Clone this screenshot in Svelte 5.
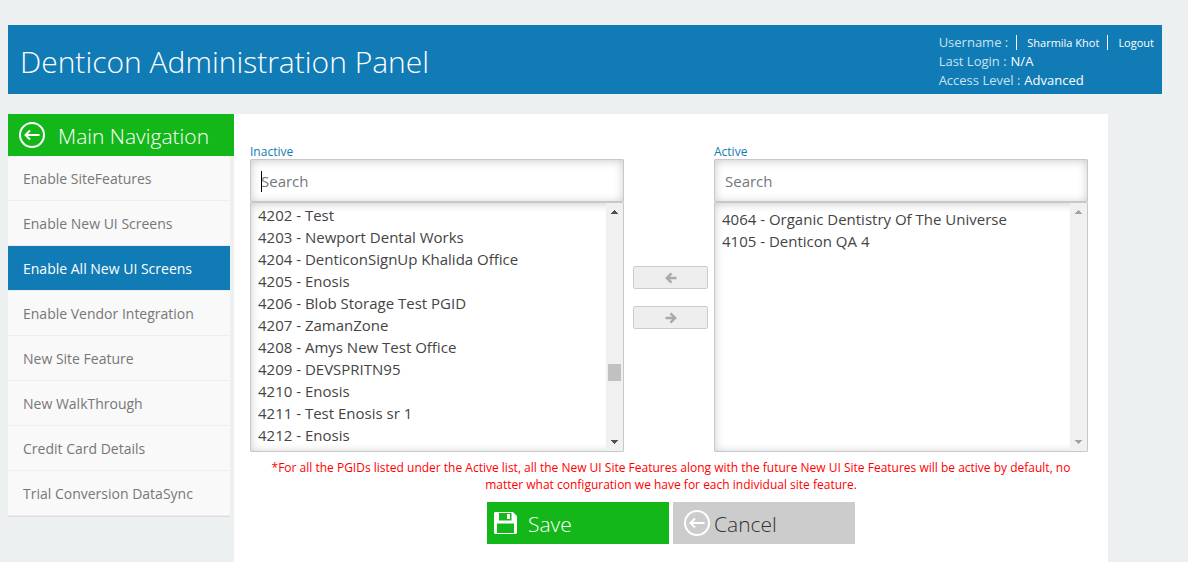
<script>
  const account = [
    { label: 'Last Login', value: 'N/A' },
    { label: 'Access Level', value: 'Advanced' }
  ];

  const links = [
    'Enable SiteFeatures',
    'Enable New UI Screens',
    'Enable All New UI Screens',
    'Enable Vendor Integration',
    'New Site Feature',
    'New WalkThrough',
    'Credit Card Details',
    'Trial Conversion DataSync'
  ];
  let current = $state('Enable All New UI Screens');

  let inactive = $state([
    '4202 - Test',
    '4203 - Newport Dental Works',
    '4204 - DenticonSignUp Khalida Office',
    '4205 - Enosis',
    '4206 - Blob Storage Test PGID',
    '4207 - ZamanZone',
    '4208 - Amys New Test Office',
    '4209 - DEVSPRITN95',
    '4210 - Enosis',
    '4211 - Test Enosis sr 1',
    '4212 - Enosis'
  ]);
  let active = $state([
    '4064 - Organic Dentistry Of The Universe',
    '4105 - Denticon QA 4'
  ]);

  let inactiveQuery = $state('');
  let activeQuery = $state('');
  let inactivePicked = $state([]);
  let activePicked = $state([]);

  const matches = (list, query) =>
    list.filter((name) => name.toLowerCase().includes(query.toLowerCase()));

  function activate() {
    active = [...active, ...inactivePicked];
    inactive = inactive.filter((name) => !inactivePicked.includes(name));
    inactivePicked = [];
  }

  function deactivate() {
    inactive = [...inactive, ...activePicked];
    active = active.filter((name) => !activePicked.includes(name));
    activePicked = [];
  }
</script>

{#snippet circleArrow()}
  <svg class="circle" viewBox="0 0 26 26" aria-hidden="true">
    <circle cx="13" cy="13" r="12" />
    <path d="M20.500 13H6.500M11 8.500L6.500 13L11 17.500" />
  </svg>
{/snippet}

{#snippet scrollbar(thumb)}
  <div class="scrollbar" class:idle={!thumb} aria-hidden="true">
    <svg viewBox="0 0 7 4"><path d="M3 0h1v1h1v1h1v1h1v1H0V3h1V2h1V1h1z" /></svg>
    <div class="track">
      {#if thumb}<div class="thumb"></div>{/if}
    </div>
    <svg viewBox="0 0 7 4"><path d="M0 0h7v1H6v1H5v1H4v1H3V3H2V2H1V1H0z" /></svg>
  </div>
{/snippet}

<div class="page">
  <header>
    <h1>Denticon Administration Panel</h1>
    <div class="account">
      <div class="line">
        Username :
        <a class="small" href="#profile">Sharmila Khot</a>
        <a class="small" href="#logout">Logout</a>
      </div>
      {#each account as item}
        <div class="line">{item.label} : <b>{item.value}</b></div>
      {/each}
    </div>
  </header>

  <div class="columns">
    <nav>
      <h2>{@render circleArrow()}<span>Main Navigation</span></h2>
      <ul>
        {#each links as link}
          <li>
            <a href="#nav" class:current={link === current} onclick={() => (current = link)}>{link}</a>
          </li>
        {/each}
      </ul>
    </nav>

    <main>
      <div class="lists">
        <section>
          <label for="inactive-search">Inactive</label>
          <div class="search">
            <span class="caret"></span>
            <input id="inactive-search" type="text" placeholder="Search" bind:value={inactiveQuery} />
          </div>
          <div class="listbox">
            <select multiple aria-label="Inactive" bind:value={inactivePicked}>
              {#each matches(inactive, inactiveQuery) as name}<option>{name}</option>{/each}
            </select>
            {@render scrollbar(true)}
          </div>
        </section>

        <div class="movers">
          <button type="button" aria-label="Move to inactive" onclick={deactivate}>
            <svg viewBox="0 0 12 12" aria-hidden="true"><path d="M11.500 6H2M6.500 1.300L1.800 6L6.500 10.700" /></svg>
          </button>
          <button type="button" aria-label="Move to active" onclick={activate}>
            <svg viewBox="0 0 12 12" aria-hidden="true"><path d="M0.500 6H10M5.500 1.300L10.200 6L5.500 10.700" /></svg>
          </button>
        </div>

        <section>
          <label for="active-search">Active</label>
          <div class="search">
            <input id="active-search" type="text" placeholder="Search" bind:value={activeQuery} />
          </div>
          <div class="listbox">
            <select class="top" multiple aria-label="Active" bind:value={activePicked}>
              {#each matches(active, activeQuery) as name}<option>{name}</option>{/each}
            </select>
            {@render scrollbar(false)}
          </div>
        </section>
      </div>

      <p class="note">
        *For all the PGIDs listed under the Active list, all the New UI Site Features along with the
        future New UI Site Features will be active by default, no matter what configuration we have for
        each individual site feature.
      </p>

      <div class="actions">
        <button type="button" class="save">
          <svg class="disk" viewBox="0 0 23 22" aria-hidden="true">
            <path
              fill-rule="evenodd"
              d="M1 0H19L23 4V21L22 22H1L0 21V1ZM5 1V8.500H17.500V1ZM3 11.500V21H20V11.500Z"
            />
            <path d="M13 2h3v5h-3z" />
          </svg>
          <span>Save</span>
        </button>
        <button type="button" class="cancel">{@render circleArrow()}<span>Cancel</span></button>
      </div>
    </main>
  </div>
</div>

<style>
  :global(body) {
    margin: 0;
    background: #ecf0f1;
  }

  .page {
    display: flex;
    flex-direction: column;
    gap: 20px;
    box-sizing: border-box;
    min-height: 100vh;
    padding: 25px 26px 0 8px;
    font-family: 'Segoe UI', 'Open Sans', sans-serif;
    font-size: 14px;
  }

  header {
    display: flex;
    justify-content: space-between;
    padding: 8px 8px 4px 12px;
    background: #117bb6;
    color: #fff;
  }

  h1,
  h2 {
    margin: 0;
    font-weight: 300;
  }

  h1 {
    font-size: 30px;
    line-height: 57px;
  }

  .account {
    font-size: 13px;
    line-height: 19px;
    color: #c8e2f0;
  }

  .line {
    display: flex;
    align-items: center;
    gap: 4px;
  }

  .line b {
    font-weight: 400;
    color: #fff;
  }

  .small {
    margin-left: 4px;
    padding-left: 10px;
    border-left: 1px solid #fff;
    font-size: 11px;
    line-height: 15px;
    color: #fff;
    text-decoration: none;
  }

  .columns {
    display: flex;
    flex: 1;
    padding-right: 54px;
  }

  nav {
    flex: 0 0 226px;
  }

  h2 {
    display: flex;
    align-items: center;
    gap: 13px;
    padding-left: 11px;
    background: #14b71a;
    color: #fff;
    font-size: 21px;
    line-height: 40px;
  }

  h2 span,
  .actions span {
    padding-top: 2px;
  }

  .circle {
    width: 26px;
    height: 26px;
    fill: none;
    stroke: #fff;
    stroke-width: 2;
  }

  ul {
    margin: 0 4px 0 0;
    padding: 0;
    list-style: none;
    border-bottom: 1px solid #ddd;
  }

  nav a {
    display: block;
    padding: 2px 0 0 15px;
    border-bottom: 1px solid #eee;
    background: #f9f9f9;
    color: #777;
    line-height: 42px;
    text-decoration: none;
  }

  nav a.current {
    background: #117bb6;
    color: #fff;
  }

  main {
    flex: 1;
    padding: 30px 20px 0 16px;
    background: #fff;
  }

  .lists {
    display: grid;
    grid-template-columns: 1fr 90px 1fr;
  }

  label {
    display: block;
    font-size: 12px;
    line-height: 15px;
    color: #117bb6;
  }

  .search,
  .listbox {
    position: relative;
    box-sizing: border-box;
    display: flex;
    border: 1px solid #c8c8c8;
    border-radius: 1px;
    box-shadow: inset 0 1px 10px #ccc;
  }

  .search {
    height: 43px;
  }

  .listbox {
    height: 250px;
  }

  input,
  select {
    flex: 1;
    min-width: 0;
    margin: 0;
    border: 0;
    outline: 0;
    background: transparent;
    font-family: inherit;
    font-size: 15px;
    color: #444;
  }

  input {
    padding: 1px 10px 0;
  }

  input::placeholder {
    color: #777;
    opacity: 1;
  }

  .caret {
    position: absolute;
    left: 10px;
    top: 11px;
    width: 1px;
    height: 21px;
    background: #000;
  }

  select {
    padding: 2px 5px 0;
    overflow: hidden;
    scrollbar-width: none;
  }

  select.top {
    padding-top: 6px;
  }

  option {
    box-sizing: border-box;
    height: 22px;
    padding: 0 2px;
    line-height: 22px;
  }

  .scrollbar {
    display: flex;
    flex-direction: column;
    align-items: center;
    gap: 7px;
    padding: 7px 0;
    width: 17px;
    background: #f0f0f0;
    fill: #505050;
  }

  .scrollbar.idle {
    fill: #a3a3a3;
  }

  .scrollbar svg {
    width: 7px;
    height: 4px;
  }

  .track {
    flex: 1;
    width: 13px;
  }

  .thumb {
    height: 17px;
    margin-top: 143px;
    background: #c1c1c1;
  }

  .movers {
    display: flex;
    flex-direction: column;
    gap: 17px;
    padding: 122px 6px 0 9px;
  }

  button {
    display: flex;
    align-items: center;
    border: 0;
    font-family: inherit;
  }

  .movers button {
    justify-content: center;
    height: 23px;
    padding: 1px 0 0;
    border: 1px solid #ccc;
    border-radius: 2px;
    background: #eee;
  }

  .movers svg {
    width: 12px;
    height: 12px;
    fill: none;
    stroke: #aaa;
    stroke-width: 2.500;
  }

  .note {
    margin: 7px 0 9px;
    padding-left: 4px;
    font-size: 12px;
    line-height: 17px;
    color: #f00;
    text-align: center;
  }

  .actions {
    display: flex;
    justify-content: center;
    gap: 4px;
    padding-left: 4px;
  }

  .actions button {
    width: 182px;
    height: 42px;
    font-size: 21px;
    font-weight: 300;
  }

  .save {
    gap: 11px;
    padding: 0 7px;
    background: #14b71a;
    color: #fff;
  }

  .cancel {
    gap: 4px;
    padding: 0 11px;
    background: #ccc;
    color: #333;
  }

  .disk {
    width: 23px;
    height: 22px;
    fill: #fff;
  }
</style>
